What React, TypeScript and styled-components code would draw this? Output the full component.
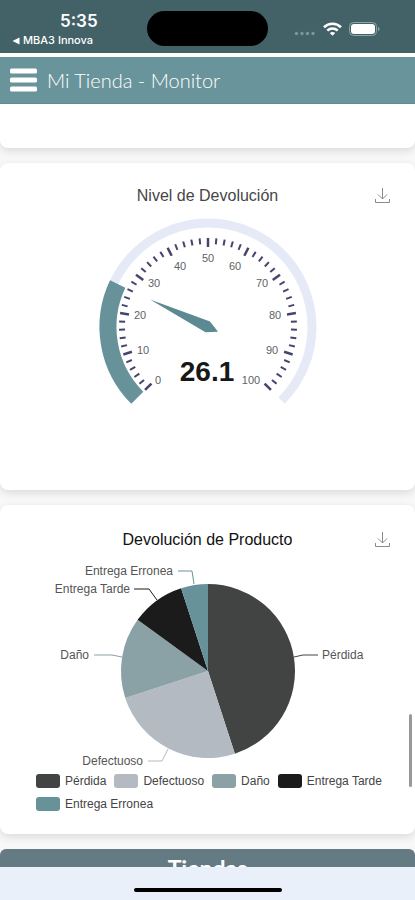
import React from "react";
import styled, { createGlobalStyle } from "styled-components";

const GlobalStyle = createGlobalStyle`
  * { box-sizing: border-box; }
  body { margin: 0; background: #f8f8f8; font-family: "Liberation Sans", Arial, sans-serif; }
  button { border: 0; padding: 0; background: none; cursor: pointer; }
`;

const Screen = styled.div`
  position: relative;
  display: flex;
  flex-direction: column;
  height: 100vh;
  overflow: hidden;
`;

const StatusBar = styled.div`
  flex: none;
  display: grid;
  grid-template-columns: 1fr 121px 1fr;
  height: 53px;
  padding-top: 11px;
  background: #426268;
  color: #fff;
  font-family: Inter, sans-serif;
`;

const StatusLeft = styled.div`
  display: flex;
  flex-direction: column;
  padding-left: 12px;
`;

const Clock = styled.time`
  padding-left: 48px;
  font-size: 17px;
  font-weight: 600;
  line-height: 21px;
`;

const BackLink = styled.a`
  display: flex;
  align-items: center;
  gap: 3px;
  color: #fff;
  font-size: 11px;
  font-weight: 500;
  line-height: 17px;
  text-decoration: none;
  white-space: nowrap;
`;

const Island = styled.div`
  height: 35px;
  border-radius: 18px;
  background: #000;
`;

const StatusRight = styled.div`
  display: flex;
  justify-content: flex-end;
  align-items: center;
  gap: 7px;
  height: 35px;
  padding-right: 35px;
`;

const AppBar = styled.header`
  flex: none;
  display: flex;
  align-items: center;
  gap: 9px;
  height: 51px;
  padding-left: 9px;
  border-top: 4px solid #fff;
  border-bottom: 1px solid #5f888f;
  background: #6a949b;
`;

const MenuButton = styled.button`
  display: flex;
  width: 29px;
  height: 24px;
`;

const AppTitle = styled.h1`
  margin: 0;
  color: #fff;
  font-family: Lato, sans-serif;
  font-size: 20px;
  font-weight: 300;
  line-height: 28px;
`;

const Content = styled.main`
  flex: 1;
  min-height: 0;
  display: flex;
  flex-direction: column;
  gap: 15px;
  overflow: hidden;
`;

const Card = styled.section`
  flex: none;
  padding: 13px 0 23px;
  border-radius: 8px;
  background: #fff;
  box-shadow: 0 3px 8px rgba(0, 0, 0, 0.12);
`;

const CardEnd = styled(Card)`
  height: 44px;
  padding: 0;
  border-radius: 0 0 8px 8px;
`;

const CardHead = styled.div<{ $height: number }>`
  display: grid;
  grid-template-columns: 40px 1fr 40px;
  align-items: center;
  height: ${(p) => p.$height}px;
  padding: 0 12px;
`;

const CardTitle = styled.h2<{ $color: string }>`
  grid-column: 2;
  margin: 0;
  color: ${(p) => p.$color};
  font-size: 16px;
  font-weight: 400;
  line-height: 24px;
  text-align: center;
`;

const DownloadButton = styled.button`
  display: flex;
  justify-content: center;
  align-items: center;
  height: 40px;
`;

const Chart = styled.svg`
  display: block;
  width: 100%;
  font-family: "Liberation Sans", Arial, sans-serif;
`;

const GaugeChart = styled(Chart)`
  height: 251px;
`;

const PieChart = styled(Chart)`
  height: 212px;
`;

const ScaleLabel = styled.text`
  fill: #606266;
  font-size: 11px;
  text-anchor: middle;
`;

const GaugeValue = styled.text`
  fill: #181818;
  font-size: 28px;
  font-weight: 700;
  text-anchor: middle;
`;

const SliceLabel = styled.text`
  fill: #555;
  font-size: 12px;
`;

const Legend = styled.ul`
  display: flex;
  flex-wrap: wrap;
  gap: 9px 8px;
  margin: 0;
  padding: 0 24px 0 36px;
  list-style: none;
`;

const LegendItem = styled.li`
  display: flex;
  align-items: center;
  gap: 5px;
  color: #444;
  font-size: 12px;
  line-height: 14px;
`;

const Swatch = styled.span<{ $color: string }>`
  width: 24px;
  height: 14px;
  border-radius: 3px;
  background: ${(p) => p.$color};
`;

const StoresHead = styled.h2`
  flex: none;
  margin: 0;
  padding: 5px 0;
  border-radius: 6px 6px 0 0;
  background: #647b83;
  color: #fff;
  font-family: Lato, sans-serif;
  font-size: 23px;
  font-weight: 700;
  line-height: 28px;
  text-align: center;
`;

const HomeArea = styled.footer`
  flex: none;
  display: flex;
  justify-content: center;
  height: 33px;
  padding-top: 21px;
  background: #eaf0f9;
`;

const HomeBar = styled.div`
  width: 148px;
  height: 4px;
  border-radius: 2px;
  background: #000;
`;

const ScrollThumb = styled.div`
  position: absolute;
  right: 3px;
  bottom: 113px;
  width: 3px;
  height: 73px;
  border-radius: 2px;
  background: #999;
`;

const polar = (cx: number, cy: number, r: number, deg: number) => {
  const a = (deg * Math.PI) / 180;
  return [cx + r * Math.sin(a), cy - r * Math.cos(a)];
};

const arc = (cx: number, cy: number, r: number, from: number, to: number) => {
  const [x1, y1] = polar(cx, cy, r, from);
  const [x2, y2] = polar(cx, cy, r, to);
  return `M${x1} ${y1}A${r} ${r} 0 ${to - from > 180 ? 1 : 0} 1 ${x2} ${y2}`;
};

const GAUGE = { x: 208, y: 111, value: 26.1 };
const gaugeAngle = (value: number) => -135 + value * 2.7;

const scale = [
  { value: 0, x: 158, y: 168 },
  { value: 10, x: 143, y: 138 },
  { value: 20, x: 140, y: 103 },
  { value: 30, x: 154, y: 71 },
  { value: 40, x: 180, y: 54 },
  { value: 50, x: 208, y: 46 },
  { value: 60, x: 235, y: 54 },
  { value: 70, x: 262, y: 71 },
  { value: 80, x: 275, y: 103 },
  { value: 90, x: 272, y: 138 },
  { value: 100, x: 251, y: 168 },
];

function Gauge() {
  return (
    <GaugeChart viewBox="0 0 415 251" role="img" aria-label="26.1">
      <path d={arc(GAUGE.x, GAUGE.y, 104, -135, 135)} fill="none" stroke="#e6eaf7" strokeWidth="9" />
      <path
        d={arc(GAUGE.x, GAUGE.y, 100, -135, gaugeAngle(GAUGE.value))}
        fill="none"
        stroke="#67929a"
        strokeWidth="17"
      />
      {Array.from({ length: 51 }, (_, i) => {
        const major = i % 5 === 0;
        const angle = gaugeAngle(i * 2);
        const [x1, y1] = polar(GAUGE.x, GAUGE.y, 89, angle);
        const [x2, y2] = polar(GAUGE.x, GAUGE.y, major ? 80 : 83, angle);
        return <path key={i} d={`M${x1} ${y1}L${x2} ${y2}`} stroke="#45446f" strokeWidth={major ? 2.5 : 2} />;
      })}
      {scale.map((s) => (
        <ScaleLabel key={s.value} x={s.x} y={s.y}>
          {s.value}
        </ScaleLabel>
      ))}
      <path d="M150 83.5L210 105.5L218 115.7L205.5 116.3Z" fill="#5c8a92" />
      <GaugeValue x="207" y="165">
        {GAUGE.value}
      </GaugeValue>
    </GaugeChart>
  );
}

const slices = [
  { name: "Pérdida", share: 45, color: "#424443", x: 322, y: 101, anchor: "start", line: "M294 99L303 97H318" },
  { name: "Defectuoso", share: 25, color: "#b3bac2", x: 143, y: 207, anchor: "end", line: "M168 191L162 203H148" },
  { name: "Daño", share: 15, color: "#8aa1a5", x: 89, y: 101, anchor: "end", line: "M122 99L112 97H94" },
  { name: "Entrega Tarde", share: 10, color: "#1b1b1b", x: 130, y: 35, anchor: "end", line: "M157 42L149 31H134" },
  { name: "Entrega Erronea", share: 5, color: "#67929a", x: 173, y: 17, anchor: "end", line: "M194 26L192 13H178" },
] as const;

function Pie() {
  let start = 0;
  return (
    <PieChart viewBox="0 4 415 212" role="img" aria-label="Devolución de Producto">
      {slices.map((s) => {
        const from = start;
        start += s.share * 3.6;
        return (
          <g key={s.name}>
            <path d={`${arc(208, 113, 87, from, start)}L208 113Z`} fill={s.color} />
            <path d={s.line} fill="none" stroke={s.color} />
            <SliceLabel x={s.x} y={s.y} textAnchor={s.anchor}>
              {s.name}
            </SliceLabel>
          </g>
        );
      })}
    </PieChart>
  );
}

function Download() {
  return (
    <DownloadButton type="button" aria-label="Descargar">
      <svg width="16" height="18" viewBox="0 0 16 18" fill="none" stroke="#8a8a8a">
        <path d="M7.500 1v11M3 7.500l4.500 4.500 4.500-4.500M0.500 12v3.500h14V12" />
      </svg>
    </DownloadButton>
  );
}

export default function App() {
  return (
    <>
      <GlobalStyle />
      <Screen>
        <StatusBar>
          <StatusLeft>
            <Clock>5:35</Clock>
            <BackLink href="#">
              <svg width="8" height="8" viewBox="0 0 8 8" fill="#fff">
                <path d="M0.500 4L7.500 0.500V7.500Z" />
              </svg>
              MBA3 Innova
            </BackLink>
          </StatusLeft>
          <Island />
          <StatusRight>
            <svg width="22" height="14" viewBox="0 0 22 14" fill="#7d9498">
              <circle cx="2.500" cy="11.500" r="1.700" />
              <circle cx="8" cy="11.500" r="1.700" />
              <circle cx="13.500" cy="11.500" r="1.700" />
              <circle cx="19" cy="11.500" r="1.700" />
            </svg>
            <svg width="19" height="14" viewBox="0 0 19 14" fill="none" stroke="#fff" strokeWidth="2.600">
              <path d="M1 5.200C5.800 0.500 13.200 0.500 18 5.200" />
              <path d="M4.300 8.600C7.300 5.800 11.700 5.800 14.700 8.600" />
              <path d="M9.500 13.800L6.800 11.100C8.300 9.700 10.700 9.700 12.200 11.100Z" fill="#fff" stroke="none" />
            </svg>
            <svg width="31" height="14" viewBox="0 0 31 14">
              <rect x="0.500" y="0.500" width="27" height="13" rx="4" fill="none" stroke="#8fa3a7" />
              <rect x="2" y="2" width="24" height="10" rx="3" fill="#fff" />
              <path d="M29 5c2 .6 2 3.400 0 4z" fill="#8fa3a7" />
            </svg>
          </StatusRight>
        </StatusBar>
        <AppBar>
          <MenuButton type="button" aria-label="Menú">
            <svg width="29" height="24" viewBox="0 0 29 24" fill="#fff">
              <rect x="1" y="0.500" width="27" height="5" rx="1.500" />
              <rect x="1" y="9.500" width="27" height="5" rx="1.500" />
              <rect x="1" y="18.500" width="27" height="5" rx="1.500" />
            </svg>
          </MenuButton>
          <AppTitle>Mi Tienda - Monitor</AppTitle>
        </AppBar>
        <Content>
          <CardEnd />
          <Card>
            <CardHead $height={40}>
              <CardTitle $color="#464646">Nivel de Devolución</CardTitle>
              <Download />
            </CardHead>
            <Gauge />
          </Card>
          <Card>
            <CardHead $height={44}>
              <CardTitle $color="#111">Devolución de Producto</CardTitle>
              <Download />
            </CardHead>
            <Pie />
            <Legend>
              {slices.map((s) => (
                <LegendItem key={s.name}>
                  <Swatch $color={s.color} />
                  {s.name}
                </LegendItem>
              ))}
            </Legend>
          </Card>
          <StoresHead>Tiendas</StoresHead>
        </Content>
        <HomeArea>
          <HomeBar />
        </HomeArea>
        <ScrollThumb />
      </Screen>
    </>
  );
}
